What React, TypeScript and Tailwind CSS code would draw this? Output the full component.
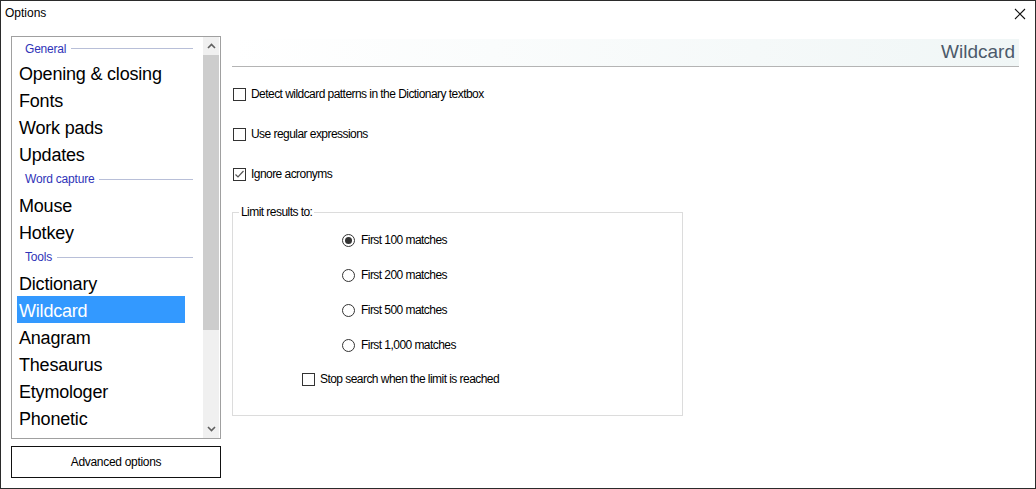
import React from "react";

const Check = ({ checked }: { checked?: boolean }) => (
  <div className="w-[13px] h-[13px] border border-[#333333] bg-white flex items-center justify-center shrink-0">
    {checked && (
      <svg width="11" height="11" viewBox="0 0 11 11">
        <polyline points="1.5,5.5 4,8 9.5,2" fill="none" stroke="#555555" strokeWidth="1.2" />
      </svg>
    )}
  </div>
);

const Radio = ({ checked, label }: { checked?: boolean; label: string }) => (
  <div className="flex items-center h-[20px] ml-[109px]">
    <div className="w-[13px] h-[13px] rounded-full border border-[#333333] bg-white flex items-center justify-center shrink-0">
      {checked && <div className="w-[7px] h-[7px] rounded-full bg-[#333333]" />}
    </div>
    <span className="ml-[6px]">{label}</span>
  </div>
);

const Header = ({ label, first }: { label: string; first?: boolean }) => (
  <div className={`flex items-center ${first ? "h-[22px] pt-[1px]" : "h-[24px]"} pl-[13px] pr-[10px]`}>
    <span className="text-[12px] text-[#2f33b8]">{label}</span>
    <div className="flex-1 h-px bg-[#b8bfd8] ml-[5px]" />
  </div>
);

const Item = ({ label, selected }: { label: string; selected?: boolean }) => (
  <div
    className={`h-[27px] flex items-center pt-[3px] ml-[5px] w-[168px] pl-[2px] text-[18px] ${
      selected ? "bg-[#3399ff] text-white" : "text-black"
    }`}
  >
    {label}
  </div>
);

export default function App() {
  return (
    <div className="w-[1036px] h-[489px] border border-[#2b2b2b] bg-white flex flex-col font-['Liberation_Sans',Arial,sans-serif] text-[12px] text-black overflow-hidden">
      {/* Title bar */}
      <div className="h-[35px] shrink-0 flex items-start justify-between pl-[4px] pr-[6px] pt-[4px]">
        <span className="leading-[16px]">Options</span>
        <svg width="12" height="12" viewBox="0 0 12 12" className="mt-[3px] mr-[3px]">
          <path d="M1 1 L11 11 M11 1 L1 11" stroke="#111" strokeWidth="1.1" />
        </svg>
      </div>

      <div className="flex flex-1 pl-[10px]">
        {/* Left column */}
        <div className="w-[210px] flex flex-col">
          <div className="h-[403px] border border-[#a0a0a0] flex overflow-hidden">
            <div className="flex-1 flex flex-col tracking-[-0.2px]">
              <Header label="General" first />
              <Item label="Opening & closing" />
              <Item label="Fonts" />
              <Item label="Work pads" />
              <Item label="Updates" />
              <Header label="Word capture" />
              <Item label="Mouse" />
              <Item label="Hotkey" />
              <Header label="Tools" />
              <Item label="Dictionary" />
              <Item label="Wildcard" selected />
              <Item label="Anagram" />
              <Item label="Thesaurus" />
              <Item label="Etymologer" />
              <Item label="Phonetic" />
            </div>
            <div className="w-[16px] mr-[1px] bg-[#f0f0f0] flex flex-col">
              <div className="h-[18px] flex items-center justify-center">
                <svg width="9" height="6" viewBox="0 0 9 6">
                  <polyline points="1,5 4.5,1.5 8,5" fill="none" stroke="#606060" strokeWidth="1.6" />
                </svg>
              </div>
              <div className="h-[275px] bg-[#cdcdcd]" />
              <div className="flex-1" />
              <div className="h-[18px] flex items-center justify-center">
                <svg width="9" height="6" viewBox="0 0 9 6">
                  <polyline points="1,1 4.5,4.5 8,1" fill="none" stroke="#606060" strokeWidth="1.6" />
                </svg>
              </div>
            </div>
          </div>
          <div className="mt-[7px] h-[32px] border border-[#111] flex items-center justify-center tracking-[-0.3px]">
            Advanced options
          </div>
        </div>

        {/* Right column */}
        <div className="ml-[11px] w-[787px] flex flex-col tracking-[-0.55px]">
          <div className="mt-[3px] h-[28px] bg-gradient-to-r from-white to-[#f0f6f6] border-b border-[#b4b4b4] flex items-center justify-end pr-[4px] tracking-normal">
            <span className="text-[19px] text-[#4c5a6a]">Wildcard</span>
          </div>

          <div className="flex flex-col gap-[20px] mt-[17px]">
            <div className="flex items-center h-[20px] pl-[1px]">
              <Check />
              <span className="ml-[5px]">Detect wildcard patterns in the Dictionary textbox</span>
            </div>
            <div className="flex items-center h-[20px] pl-[1px]">
              <Check />
              <span className="ml-[5px]">Use regular expressions</span>
            </div>
            <div className="flex items-center h-[20px] pl-[1px]">
              <Check checked />
              <span className="ml-[5px]">Ignore acronyms</span>
            </div>
          </div>

          <fieldset className="mt-[21px] w-[451px] h-[211px] border border-[#dcdcdc] pl-0 pr-0 pt-[11px] m-0">
            <legend className="ml-[6px] px-[2px] leading-[14px]">Limit results to:</legend>
            <div className="flex flex-col gap-[15px]">
              <Radio checked label="First 100 matches" />
              <Radio label="First 200 matches" />
              <Radio label="First 500 matches" />
              <Radio label="First 1,000 matches" />
            </div>
            <div className="flex items-center h-[20px] ml-[69px] mt-[14px]">
              <Check />
              <span className="ml-[5px]">Stop search when the limit is reached</span>
            </div>
          </fieldset>
        </div>
      </div>
    </div>
  );
}
